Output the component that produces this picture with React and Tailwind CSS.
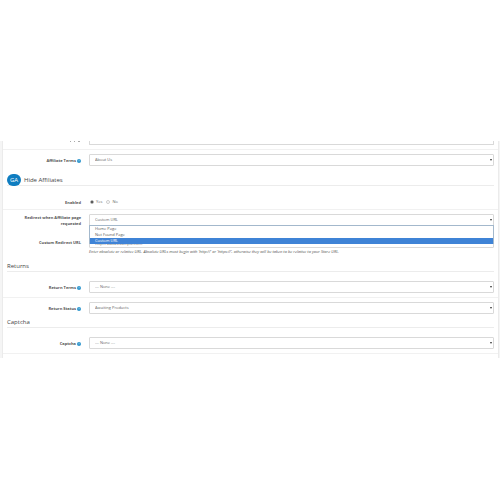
import React from 'react';

function HelpIcon() {
  return (
    <svg viewBox="0 0 12 12" className="ml-px size-[4px] shrink-0" aria-hidden="true">
      <circle cx="6" cy="6" r="6" fill="#2a94cd" />
      <path d="M4.2 4.6a1.8 1.8 0 1 1 2.6 1.6c-.6.3-.8.6-.8 1.1M6 8.6v1" stroke="#fff" strokeWidth="1" fill="none" />
    </svg>
  );
}

function Row({ label, id, help, className, children }) {
  return (
    <div className={`flex px-[4px] ${className}`}>
      <label
        htmlFor={id}
        className="flex w-[15.2%] shrink-0 items-center justify-end pt-px text-right text-[4px] leading-[6px] font-bold text-[#555]"
      >
        {label}
        {help && <HelpIcon />}
      </label>
      <div className="relative ml-[8px] min-w-0 flex-1">{children}</div>
    </div>
  );
}

function SelectBox({ id, options, value }) {
  return (
    <div className="relative">
      <select
        id={id}
        defaultValue={value}
        className="block h-[12px] w-full appearance-none rounded-[1px] border border-[#d9d9d9] bg-white px-[5px] text-[4px] leading-[10px] text-[#666] outline-none"
      >
        {options.map((option) => (
          <option key={option}>{option}</option>
        ))}
      </select>
      <svg viewBox="0 0 4 4" className="pointer-events-none absolute top-[5px] right-[2px] size-[2px]" aria-hidden="true">
        <path d="M0 0h4L2 4z" fill="#333" />
      </svg>
    </div>
  );
}

function SectionTitle({ badge, className, children }) {
  return (
    <div className={`mx-[4px] flex h-[12px] items-center border-b border-[#ececec] ${className}`}>
      {badge && (
        <span className="mr-[3px] flex h-[12px] w-[14px] shrink-0 items-center justify-center rounded-full bg-[#0f7dc0] text-[6px] leading-[12px] text-white">
          {badge}
        </span>
      )}
      <h2 className="text-[6px] leading-[10px] text-[#444]">{children}</h2>
    </div>
  );
}

const redirectOptions = ['Home Page', 'Not Found Page', 'Custom URL'];

export default function App() {
  return (
    <div className="min-h-screen bg-white pt-[141px] font-['Open_Sans',sans-serif]">
      <div className="bg-[#f5f5f5] pr-px pl-[2px]">
        <form className="border-x border-[#ebebeb] bg-white pb-[4px]">
          {/* Tail of the row above, cut off by the scroll area */}
          <div className="flex h-[4px] px-[4px]">
            <div className="flex w-[15.2%] shrink-0 justify-end gap-[3px] pr-px">
              <span className="h-px w-px bg-[#aaa]" />
              <span className="h-px w-px bg-[#aaa]" />
              <span className="h-px w-[2px] bg-[#aaa]" />
            </div>
            <div className="ml-[8px] flex-1 rounded-b-[1px] border border-t-0 border-[#d9d9d9]" />
          </div>

          <Row label="Affiliate Terms" id="affiliate-terms" help className="mt-[4px] border-t border-[#f1f1f1] pt-[4px]">
            <SelectBox id="affiliate-terms" value="About Us" options={['About Us']} />
          </Row>

          <SectionTitle badge="GA" className="mt-[8px]">Hide Affiliates</SectionTitle>

          <Row label="Enabled" id="enabled-yes" className="mt-[10px] h-[12px]">
            <div className="flex h-full items-center gap-[4px] pl-px text-[4px] leading-[6px] text-[#666]">
              <label className="flex items-center gap-[2px]">
                <input
                  id="enabled-yes"
                  type="radio"
                  name="enabled"
                  defaultChecked
                  className="size-[4px] appearance-none rounded-full border border-[#bbb] checked:bg-[#333]"
                />
                Yes
              </label>
              <label className="flex items-center gap-[2px]">
                <input
                  type="radio"
                  name="enabled"
                  className="size-[4px] appearance-none rounded-full border border-[#ccc] checked:bg-[#333]"
                />
                No
              </label>
            </div>
          </Row>

          <Row
            label="Redirect when Affiliate page requested"
            id="redirect"
            className="mt-px border-t border-[#f1f1f1] pt-[4px]"
          >
            <SelectBox id="redirect" value="Custom URL" options={redirectOptions} />
            <ul
              role="listbox"
              className="absolute top-[11px] right-0 left-0 z-10 border border-b-0 border-[#a3b8cc] bg-white text-[4px] leading-[6px] text-[#555]"
            >
              {redirectOptions.map((option) => (
                <li
                  key={option}
                  role="option"
                  aria-selected={option === 'Custom URL'}
                  className="px-[5px] aria-selected:bg-[#3f83d6] aria-selected:text-white"
                >
                  {option}
                </li>
              ))}
            </ul>
          </Row>

          <Row label="Custom Redirect URL" id="redirect-url" className="mt-[9px]">
            <input
              id="redirect-url"
              type="text"
              defaultValue="http://www.example.com"
              className="block h-[12px] w-full rounded-[1px] border border-[#d9d9d9] bg-white px-[5px] pt-[2px] text-[4px] text-[#666] outline-none"
            />
          </Row>
          <div className="flex px-[4px]">
            <div className="w-[15.2%] shrink-0" />
            <p className="ml-[8px] pt-px text-[4px] leading-[6px] text-[#555] italic">
              Enter absolute or relative URL. Absolute URLs must begin with 'http://' or 'https://', otherwise they will be taken to be relative to your Store URL.
            </p>
          </div>

          <SectionTitle className="mt-[5px]">Returns</SectionTitle>

          <Row label="Return Terms" id="return-terms" help className="mt-[9px]">
            <SelectBox id="return-terms" value="--- None ---" options={['--- None ---']} />
          </Row>
          <Row label="Return Status" id="return-status" help className="mt-[4px] border-t border-[#f1f1f1] pt-[4px]">
            <SelectBox id="return-status" value="Awaiting Products" options={['Awaiting Products']} />
          </Row>

          <SectionTitle className="mt-[2px]">Captcha</SectionTitle>

          <Row label="Captcha" id="captcha" help className="mt-[9px] border-b border-[#f1f1f1] pb-[4px]">
            <SelectBox id="captcha" value="--- None ---" options={['--- None ---']} />
          </Row>
        </form>
      </div>
    </div>
  );
}
